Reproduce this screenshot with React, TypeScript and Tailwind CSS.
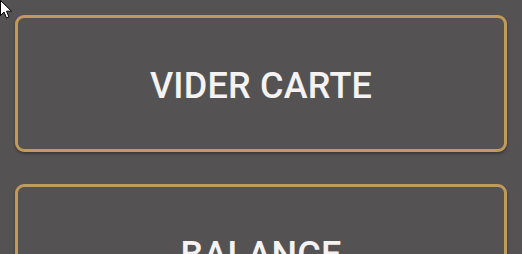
import React from 'react';

function Cursor() {
  return (
    <svg className="absolute left-0 top-0" width="13" height="20" viewBox="0 0 13 20">
      <path d="M0.5 0.5 L0.5 15.5 L4 12 L6.5 18 L9 17 L6.5 11.2 L11.5 11.2 Z" fill="#fff" stroke="#000" strokeWidth="1" />
    </svg>
  );
}

function ActionButton({ label }: { label: string }) {
  return (
    <button className="flex h-[137px] w-full shrink-0 items-center justify-center rounded-[9px] border-[3px] border-[#c09a5d] bg-[#545253] shadow-[0_2px_3px_rgba(0,0,0,0.3)]">
      <span className="mt-[4px] text-[36px] font-medium tracking-[0.2px] text-[#f4f2f3]">{label}</span>
    </button>
  );
}

export default function App() {
  return (
    <div
      className="relative h-[254px] w-[522px] overflow-hidden bg-[#545253]"
      style={{ fontFamily: 'Roboto, "Liberation Sans", sans-serif' }}
    >
      <div className="flex flex-col gap-8 p-[15px]">
        <ActionButton label="VIDER CARTE" />
        <ActionButton label="BALANCE" />
      </div>
      <Cursor />
    </div>
  );
}
